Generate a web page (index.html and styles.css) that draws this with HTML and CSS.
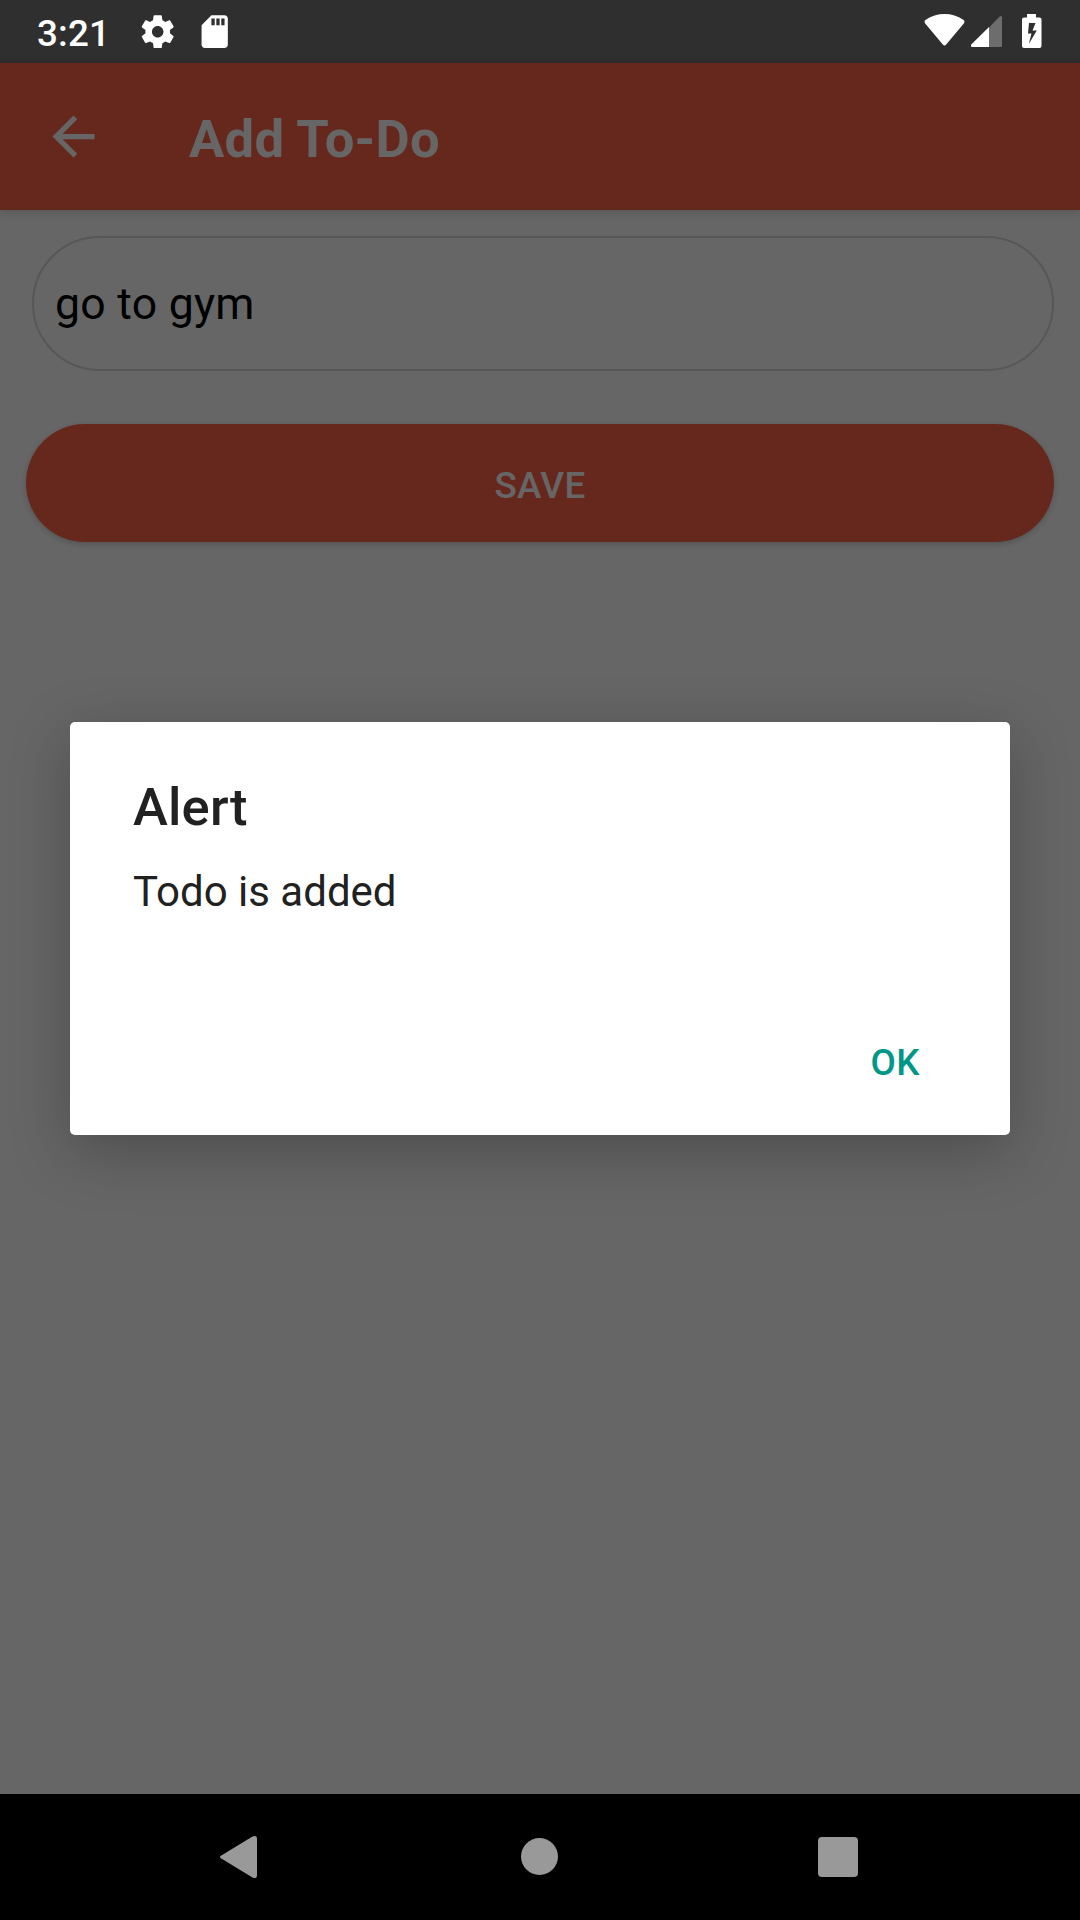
FILE: index.html
```html
<!DOCTYPE html>
<html lang="en">
<head>
<meta charset="utf-8">
<title>Add To-Do</title>
<link rel="stylesheet" href="styles.css">
</head>
<body>
<div class="device">
  <header class="status-bar">
    <div class="status-left">
      <span class="clock">3:21</span>
      <svg class="status-icon gear" viewBox="0 0 24 24"><path d="M19.43 12.98c.04-.32.07-.64.07-.98s-.03-.66-.07-.98l2.11-1.65c.19-.15.24-.42.12-.64l-2-3.46c-.12-.22-.39-.3-.61-.22l-2.49 1c-.52-.4-1.08-.73-1.69-.98l-.38-2.65C14.46 2.18 14.25 2 14 2h-4c-.25 0-.46.18-.49.42l-.38 2.65c-.61.25-1.17.59-1.69.98l-2.49-1c-.23-.09-.49 0-.61.22l-2 3.46c-.13.22-.07.49.12.64l2.11 1.65c-.04.32-.07.65-.07.98s.03.66.07.98l-2.11 1.65c-.19.15-.24.42-.12.64l2 3.46c.12.22.39.3.61.22l2.49-1c.52.4 1.08.73 1.69.98l.38 2.65c.03.24.24.42.49.42h4c.25 0 .46-.18.49-.42l.38-2.65c.61-.25 1.17-.59 1.69-.98l2.49 1c.23.09.49 0 .61-.22l2-3.46c.12-.22.07-.49-.12-.64l-2.11-1.65zM12 15.5c-1.93 0-3.5-1.57-3.5-3.5s1.57-3.5 3.5-3.5 3.5 1.57 3.5 3.5-1.57 3.5-3.5 3.5z"/></svg>
      <svg class="status-icon" viewBox="0 0 24 24"><path d="M18 2h-8L4.02 8 4 20c0 1.1.9 2 2 2h12c1.1 0 2-.9 2-2V4c0-1.1-.9-2-2-2zm-6 6h-2V4h2v4zm3 0h-2V4h2v4zm3 0h-2V4h2v4z"/></svg>
    </div>
    <svg class="status-right" viewBox="0 0 120 63">
      <path d="M5.2 23.4Q3.6 21.3 5.8 19.8Q14 14 24.5 14T43.200 19.800Q45.400 21.300 43.800 23.400L26.200 44.600Q24.500 46.600 22.800 44.600Z"/>
      <path class="faint" d="M69 27.500L79.400 16.800Q82 14.800 82 17.800V45.500Q82 47 80.500 47H69Z"/>
      <path d="M69 27L51.500 44.300Q50 47 52.500 47H69Z"/>
      <path fill-rule="evenodd" d="M107 14h9v3.500h3.500q2 0 2 2V46q0 2-2 2h-15.500q-2 0-2-2V19.500q0-2 2-2h3zM109 23l-1 10.500h3.500l-2.700 10.500 8-13.500h-4.300l3-7.500z"/>
    </svg>
  </header>

  <main class="screen">
    <div class="app-bar">
      <svg class="back" viewBox="0 0 24 24"><path d="M20 11H7.830l5.590-5.590L12 4l-8 8 8 8 1.410-1.410L7.830 13H20v-2z"/></svg>
      <h1 class="title">Add To-Do</h1>
    </div>
    <form class="form">
      <div class="field">go to gym</div>
      <button class="save" type="button">SAVE</button>
    </form>
    <div class="scrim">
      <section class="dialog">
        <h2 class="dialog-title">Alert</h2>
        <p class="dialog-text">Todo is added</p>
        <button class="dialog-action" type="button">OK</button>
      </section>
    </div>
  </main>

  <nav class="nav-bar">
    <svg class="nav-icon" viewBox="0 0 60 60"><path d="M10.900 28.800L42.500 9.600Q47 7.400 47 12V48Q47 52.600 42.500 50.400L10.900 31.200Q9 30 10.900 28.800Z"/></svg>
    <svg class="nav-icon" viewBox="0 0 60 60"><circle cx="29.500" cy="29.500" r="18.500"/></svg>
    <svg class="nav-icon" viewBox="0 0 60 60"><rect x="8" y="10" width="40" height="40" rx="4"/></svg>
  </nav>
</div>
</body>
</html>
```
FILE: styles.css
```css
* {
  box-sizing: border-box;
}

body {
  margin: 0;
  font-family: Roboto, sans-serif;
}

h1, h2, p {
  margin: 0;
}

button {
  border: 0;
  font-family: inherit;
}

svg {
  display: block;
  flex: none;
}

.device {
  display: flex;
  flex-direction: column;
  width: 1080px;
  height: 1920px;
  overflow: hidden;
}

.status-bar {
  display: flex;
  justify-content: space-between;
  height: 63px;
  padding-left: 37px;
  padding-right: 40px;
  background: #2f2f2f;
  color: #fff;
  fill: #fff;
}

.status-left {
  display: flex;
  align-items: center;
}

.clock {
  width: 100.500px;
  padding-top: 3px;
  font-size: 36.75px;
  font-weight: 500;
  line-height: 43px;
  letter-spacing: 0.2px;
}

.status-icon {
  width: 39.4px;
  height: 39.4px;
}

.gear {
  margin-right: 18.6px;
}

.status-right {
  width: 120px;
  height: 63px;
  overflow: visible;
}

.faint {
  opacity: 0.3;
}

.screen {
  position: relative;
  flex: 1;
  background: #fff;
}

.app-bar {
  display: flex;
  align-items: center;
  gap: 84px;
  height: 147px;
  padding-left: 42px;
  background: #ff6347;
  box-shadow: 0 2px 10px rgba(0, 0, 0, 0.18);
  color: #fff;
}

.back {
  width: 63px;
  height: 63px;
  fill: #fff;
}

.title {
  padding-top: 4px;
  font-size: 52.5px;
  font-weight: 700;
  line-height: 62px;
  letter-spacing: 0.3px;
}

.form {
  display: flex;
  flex-direction: column;
  gap: 53px;
  padding: 26px 26px 0;
}

.field {
  height: 135px;
  margin-left: 6px;
  padding: 1px 0 0 21px;
  border: 2px solid #d9d9d9;
  border-radius: 68px;
  color: #000;
  font-size: 44.6px;
  line-height: 131px;
  letter-spacing: 0.25px;
}

.save {
  height: 118px;
  padding: 4px 0 0;
  border-radius: 59px;
  background: #ff6347;
  box-shadow: 0 2px 6px rgba(0, 0, 0, 0.2);
  color: #fff;
  font-size: 36.75px;
  font-weight: 500;
  letter-spacing: 0.4px;
}

.scrim {
  position: absolute;
  inset: 0;
  display: flex;
  align-items: center;
  justify-content: center;
  background: rgba(0, 0, 0, 0.6);
}

.dialog {
  display: flex;
  flex-direction: column;
  width: 940px;
  height: 413px;
  padding: 54px 63px 0;
  border-radius: 5px;
  background: #fff;
  box-shadow: 0 16px 60px rgba(0, 0, 0, 0.25);
  color: #212121;
}

.dialog-title {
  font-size: 52.5px;
  font-weight: 500;
  line-height: 62px;
  letter-spacing: 0.2px;
}

.dialog-text {
  margin-top: 29px;
  font-size: 42px;
  line-height: 49px;
}

.dialog-action {
  align-self: flex-end;
  margin-top: 125px;
  padding: 0 27px;
  background: none;
  color: #009688;
  font-size: 36.75px;
  font-weight: 500;
  line-height: 43px;
  letter-spacing: 0.5px;
}

.nav-bar {
  display: flex;
  align-items: center;
  justify-content: space-between;
  height: 126px;
  padding: 0 210px;
  background: #000;
  fill: #999;
}

.nav-icon {
  width: 60px;
  height: 60px;
}
```
